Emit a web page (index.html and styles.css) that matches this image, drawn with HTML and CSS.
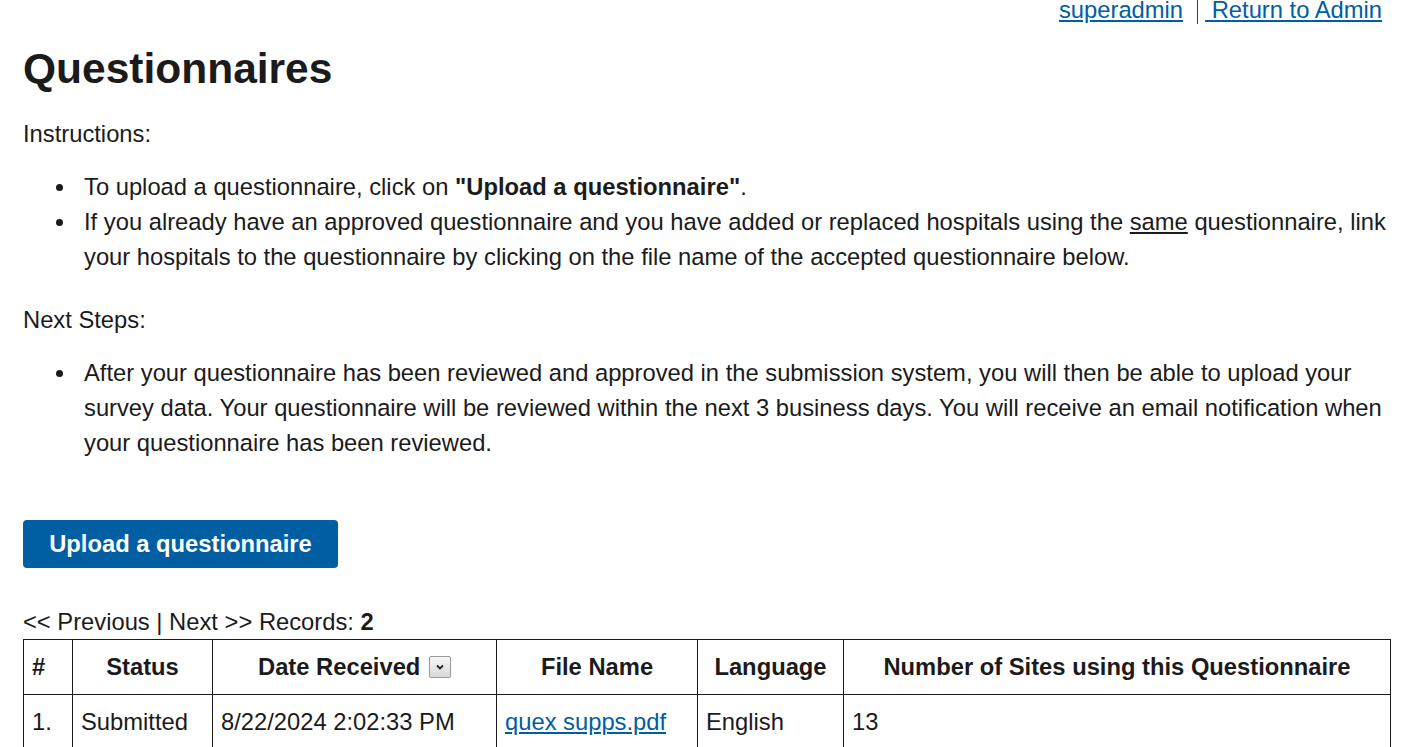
FILE: index.html
```html
<!DOCTYPE html>
<html lang="en">
<head>
<meta charset="utf-8">
<title>Questionnaires</title>
<link rel="stylesheet" href="styles.css">
</head>
<body>
<div class="topbar">
  <a class="toplink" href="#">superadmin</a>
  <span class="sep"></span>
  <a class="toplink" href="#">&nbsp;Return to Admin</a>
</div>
<main class="page">
  <h1 class="title">Questionnaires</h1>
  <p class="para">Instructions:</p>
  <ul class="list">
    <li>To upload a questionnaire, click on <strong>"Upload a questionnaire"</strong>.</li>
    <li>If you already have an approved questionnaire and you have added or replaced hospitals using the <u>same</u> questionnaire, link your hospitals to the questionnaire by clicking on the file name of the accepted questionnaire below.</li>
  </ul>
  <p class="para next">Next Steps:</p>
  <ul class="list">
    <li>After your questionnaire has been reviewed and approved in the submission system, you will then be able to upload your survey data. Your questionnaire will be reviewed within the next 3 business days. You will receive an email notification when your questionnaire has been reviewed.</li>
  </ul>
  <button class="btn" type="button">Upload a questionnaire</button>
  <div class="pager">&lt;&lt; Previous | Next &gt;&gt; Records: <strong>2</strong></div>
  <table class="grid">
    <colgroup>
      <col class="c1"><col class="c2"><col class="c3"><col class="c4"><col class="c5"><col class="c6">
    </colgroup>
    <thead>
      <tr>
        <th class="left">#</th>
        <th>Status</th>
        <th>Date Received <span class="sort"><svg width="10" height="8" viewBox="0 0 10 8"><path d="M2 2.5 L5 5.5 L8 2.5" fill="none" stroke="#222" stroke-width="1.8"/></svg></span></th>
        <th>File Name</th>
        <th>Language</th>
        <th>Number of Sites using this Questionnaire</th>
      </tr>
    </thead>
    <tbody>
      <tr>
        <td>1.</td>
        <td>Submitted</td>
        <td>8/22/2024 2:02:33 PM</td>
        <td><a href="#">quex supps.pdf</a></td>
        <td>English</td>
        <td>13</td>
      </tr>
    </tbody>
  </table>
</main>
</body>
</html>
```
FILE: styles.css
```css
html, body {
  margin: 0;
  padding: 0;
  background: #fff;
}
body {
  font-family: "Liberation Sans", Arial, sans-serif;
  font-size: 23.75px;
  color: #1b1b1b;
}
a {
  color: #005ea2;
}
.topbar {
  display: flex;
  justify-content: flex-end;
  align-items: flex-start;
  height: 20px;
  line-height: 20px;
  padding-right: 27px;
}
.sep {
  width: 1px;
  height: 24px;
  background: #1d4f4f;
  margin: 0 7px 0 14px;
}
.page {
  padding: 0 20px 0 23px;
}
.title {
  font-size: 42.5px;
  line-height: 51px;
  margin: 22.5px 0 22px 0;
  font-weight: bold;
}
.para {
  margin: 0;
  line-height: 35px;
}
.next {
  margin-top: 28px;
}
.list {
  margin: 18px 0 0 0;
  padding-left: 61px;
  line-height: 35px;
  list-style: none;
}
.list li::before {
  content: "";
  display: inline-block;
  width: 7px;
  height: 7px;
  border-radius: 50%;
  background: #1b1b1b;
  margin-left: -28px;
  margin-right: 21px;
  vertical-align: 4px;
}
.btn {
  display: block;
  margin-top: 60.5px;
  width: 315px;
  height: 48px;
  border: none;
  border-radius: 4px;
  background: #005ea2;
  color: #fff;
  font-family: "Liberation Sans", Arial, sans-serif;
  font-size: 23.75px;
  font-weight: bold;
  padding: 0;
}
.pager {
  margin-top: 36px;
  line-height: 35px;
}
.grid {
  border-collapse: collapse;
  width: 1367px;
  table-layout: fixed;
}
.c1 { width: 49px; }
.c2 { width: 140px; }
.c3 { width: 284px; }
.c4 { width: 201px; }
.c5 { width: 146px; }
.c6 { width: 547px; }
.grid th, .grid td {
  border: 1.5px solid #1b1b1b;
  height: 54px;
  padding: 0 8px;
  white-space: nowrap;
}
.grid th {
  text-align: center;
  font-weight: bold;
}
.grid th.left {
  text-align: left;
}
.grid td {
  text-align: left;
}
.sort {
  display: inline-flex;
  align-items: center;
  justify-content: center;
  width: 22px;
  height: 22px;
  box-sizing: border-box;
  border: 1px solid #9a9a9a;
  border-radius: 2px;
  background: linear-gradient(#f6f6f6, #d8d8d8);
  vertical-align: middle;
  margin-left: 2px;
  position: relative;
  top: -2px;
}
```
